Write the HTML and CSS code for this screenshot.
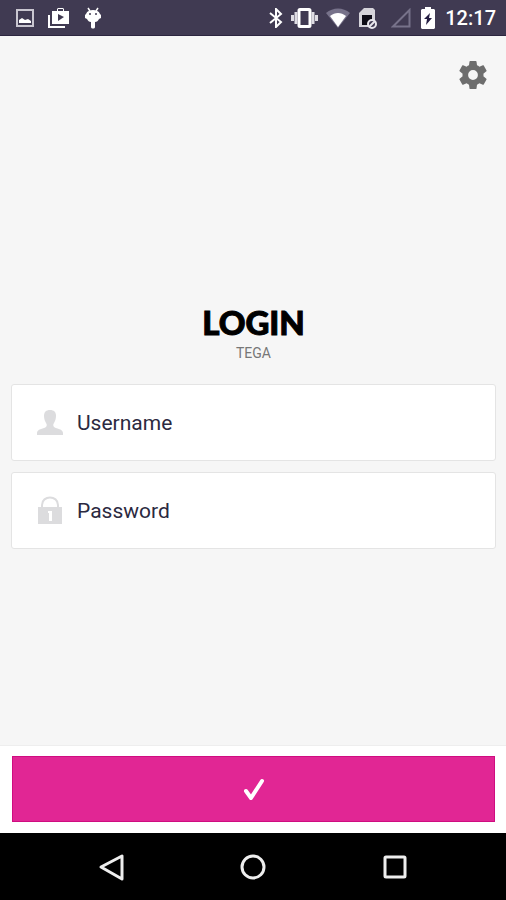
FILE: index.html
```html
<!DOCTYPE html>
<html lang="en">
<head>
  <meta charset="utf-8">
  <meta name="viewport" content="width=device-width, initial-scale=1">
  <title>Login</title>
  <link rel="stylesheet" href="styles.css">
</head>
<body>
  <header class="status">
    <div class="status-group status-left">
      <svg width="18" height="18" viewBox="0 0 18 18" aria-hidden="true">
        <rect x="1" y="1" width="16" height="16" fill="none" stroke="#c9c6d0" stroke-width="2"/>
        <path d="M3 14v-3l3-2 3 2 3-1 3 2v2z" fill="#fff"/>
      </svg>
      <svg width="22" height="22" viewBox="0 0 22 22" aria-hidden="true">
        <path d="M1 8v12h16" fill="none" stroke="#fff" stroke-width="2"/>
        <path fill="#fff" fill-rule="evenodd" d="M4 4h5V2l1-1h5l1 1v2h5v13H4zM10 4h5V2h-5zM10 7v7l6-4z"/>
      </svg>
      <svg width="18" height="22" viewBox="0 0 18 22" aria-hidden="true">
        <path d="M4 1l2 3M14 1l-2 3" stroke="#fff" stroke-width="1.5"/>
        <path fill="#fff" d="M2 7C3 4 6 3 9 3s6 1 7 4l1 1v3l-2 1c-1 2-2 3-4 3v5c0 2-4 2-4 0v-5c-2 0-3-1-4-3l-2-1V8z"/>
        <circle cx="6" cy="7" r="1" fill="#403a52"/><circle cx="12" cy="7" r="1" fill="#403a52"/>
      </svg>
    </div>
    <div class="status-group status-right">
      <svg width="14" height="20" viewBox="0 0 14 20" aria-hidden="true">
        <path d="M1 5l11 9-5 5V1l5 5L1 15" fill="none" stroke="#fff" stroke-width="2"/>
      </svg>
      <svg width="27" height="20" viewBox="0 0 27 20" aria-hidden="true">
        <rect x="8" y="1.5" width="11" height="17" rx="1" fill="none" stroke="#fff" stroke-width="3"/>
        <path d="M5 4v12M22 4v12M1.500 7v6M25.500 7v6" stroke="#dedce3" stroke-width="3"/>
      </svg>
      <svg width="24" height="20" viewBox="0 0 24 20" aria-hidden="true">
        <path d="M0 5C7-1 17-1 24 5L12 20z" fill="#77728a"/>
        <path d="M4 8c5-4 11-4 16 0l-8 11z" fill="#fff"/>
      </svg>
      <svg width="20" height="22" viewBox="0 0 20 22" aria-hidden="true">
        <path d="M6 1h9l2 2v17H1V6z" fill="#d5d3da"/>
        <path d="M4 8h10v10H4z" fill="#0d0b16"/>
        <circle cx="14" cy="17" r="4" fill="#403a52" stroke="#e8e6ec" stroke-width="2"/>
        <path d="M11 20l6-6" stroke="#e8e6ec" stroke-width="2"/>
      </svg>
      <svg class="signal" width="20" height="20" viewBox="0 0 20 20" aria-hidden="true">
        <path d="M2 18.500L18.500 2v16.500z" fill="none" stroke="#77728a" stroke-width="2"/>
      </svg>
      <svg class="battery" width="14" height="22" viewBox="0 0 14 22" aria-hidden="true">
        <path d="M4 0h6v2h3l1 1v18l-1 1H1l-1-1V3l1-1h3z" fill="#fff"/>
        <path d="M9 6l-6 6h3l-1 6 6-7H8z" fill="#241d42"/>
      </svg>
      <time class="clock">12:17</time>
    </div>
  </header>

  <main class="screen">
    <div class="toolbar">
      <button class="settings" type="button" aria-label="Settings">
        <svg width="28" height="28" viewBox="2 2 20 20" aria-hidden="true">
          <path fill="#6d6d6d" d="M19.430 12.980c.04-.32.07-.64.07-.98s-.03-.66-.07-.98l2.110-1.650c.19-.15.24-.42.12-.64l-2-3.460c-.12-.22-.39-.3-.61-.22l-2.490 1c-.52-.4-1.080-.73-1.690-.98l-.38-2.650C14.460 2.180 14.250 2 14 2h-4c-.25 0-.46.18-.49.42l-.38 2.650c-.61.25-1.170.59-1.690.98l-2.490-1c-.23-.09-.49 0-.61.22l-2 3.460c-.13.22-.07.49.12.64l2.110 1.650c-.04.32-.07.65-.07.98s.03.66.07.98l-2.110 1.650c-.19.15-.24.42-.12.64l2 3.460c.12.22.39.3.61.22l2.490-1c.52.4 1.080.73 1.690.98l.38 2.650c.03.24.24.42.49.42h4c.25 0 .46-.18.49-.42l.38-2.650c.61-.25 1.170-.59 1.690-.98l2.490 1c.23.09.49 0 .61-.22l2-3.460c.12-.22.07-.49-.12-.64zM12 15.500A3.500 3.500 0 1 1 12 8.500a3.500 3.500 0 0 1 0 7z"/>
        </svg>
      </button>
    </div>
    <form class="login" id="login">
      <h1 class="title">LOGIN</h1>
      <p class="subtitle">TEGA</p>
      <label class="field">
        <svg width="26" height="26" viewBox="0 0 26 26" aria-hidden="true">
          <path fill="#dcdcde" d="M13 0c4 0 6 2 6 6 0 3-1 5-2 7-1 1-1 3 0 4 3 2 9 2 9 6v2H0v-2c0-4 6-4 9-6 1-1 1-3 0-4-1-2-2-4-2-7 0-4 2-6 6-6z"/>
        </svg>
        <input type="text" placeholder="Username" aria-label="Username">
      </label>
      <label class="field">
        <svg width="26" height="30" viewBox="0 0 26 30" aria-hidden="true">
          <path d="M5 12V9c0-10 16-10 16 0v3" fill="none" stroke="#dcdcde" stroke-width="2"/>
          <path fill="#dcdcde" fill-rule="evenodd" d="M1 11h24v17H1zM11 15v2h1v8h3V15z"/>
        </svg>
        <input type="password" placeholder="Password" aria-label="Password">
      </label>
    </form>
  </main>

  <footer class="actions">
    <button class="submit" type="submit" form="login" aria-label="Log in">
      <svg width="22" height="24" viewBox="0 0 22 24" aria-hidden="true">
        <path d="M3 14l5 7L19 4" fill="none" stroke="#fff" stroke-width="4" stroke-linecap="round" stroke-linejoin="round"/>
      </svg>
    </button>
  </footer>

  <nav class="system" aria-label="System">
    <button type="button" aria-label="Back">
      <svg width="28" height="28" viewBox="0 0 28 28" aria-hidden="true"><path d="M4 14L25 3v23z" fill="none" stroke="#eee" stroke-width="3" stroke-linejoin="round"/></svg>
    </button>
    <button type="button" aria-label="Home">
      <svg width="26" height="26" viewBox="0 0 26 26" aria-hidden="true"><circle cx="13" cy="13" r="11" fill="none" stroke="#eee" stroke-width="3"/></svg>
    </button>
    <button type="button" aria-label="Recent apps">
      <svg width="24" height="24" viewBox="0 0 24 24" aria-hidden="true"><rect x="2" y="2" width="20" height="20" rx="1" fill="none" stroke="#eee" stroke-width="3"/></svg>
    </button>
  </nav>
</body>
</html>
```
FILE: styles.css
```css
* {
  box-sizing: border-box;
}

body {
  margin: 0;
  min-height: 100vh;
  display: flex;
  flex-direction: column;
  background: #f6f6f6;
  font-family: Roboto, sans-serif;
}

svg {
  display: block;
  flex: none;
}

button {
  border: 0;
  padding: 0;
  background: none;
  display: flex;
  align-items: center;
  justify-content: center;
  cursor: pointer;
}

.status {
  height: 36px;
  padding: 0 10px 0 16px;
  display: flex;
  align-items: center;
  justify-content: space-between;
  background: #403a52;
  border-bottom: 1px solid #2c2640;
}

.status-group {
  display: flex;
  align-items: center;
}

.status-left {
  gap: 14px;
}

.status-right {
  gap: 8px;
}

.signal {
  margin: 0 2px 0 5px;
}

.battery {
  margin-right: 2px;
}

.clock {
  color: #fff;
  font-size: 20px;
  line-height: 24px;
  font-weight: 500;
}

.screen {
  flex: 1;
}

.toolbar {
  display: flex;
  justify-content: flex-end;
  padding: 15px 9px;
}

.settings {
  width: 48px;
  height: 48px;
}

.login {
  display: flex;
  flex-direction: column;
  padding: 188px 10px 0 11px;
}

.title {
  margin: 0;
  text-align: center;
  font-family: Lato, sans-serif;
  font-weight: 900;
  font-size: 33px;
  line-height: 40px;
  color: #000;
  -webkit-text-stroke: 1px #000;
}

.subtitle {
  margin: 2px 0 22px;
  text-align: center;
  font-size: 14px;
  line-height: 18px;
  color: #777;
}

.field {
  display: flex;
  align-items: center;
  gap: 14px;
  height: 77px;
  padding: 0 25px;
  background: #fff;
  border: 1px solid #e4e4e4;
  border-radius: 3px;
}

.field + .field {
  margin-top: 11px;
}

.field input {
  flex: 1;
  min-width: 0;
  border: 0;
  outline: 0;
  padding: 1px 0 0;
  background: none;
  font: 21px/28px Roboto, sans-serif;
  color: #2b2940;
}

.field input::placeholder {
  color: #2b2940;
  opacity: 1;
}

.actions {
  padding: 10px 11px 11px 12px;
  background: #fff;
  border-top: 1px solid #eee;
}

.submit {
  width: 100%;
  height: 66px;
  background: #e12694;
  border: 1px solid #cf0c80;
}

.system {
  height: 67px;
  display: grid;
  grid-template-columns: repeat(3, 28%);
  justify-content: center;
  background: #000;
}
```
